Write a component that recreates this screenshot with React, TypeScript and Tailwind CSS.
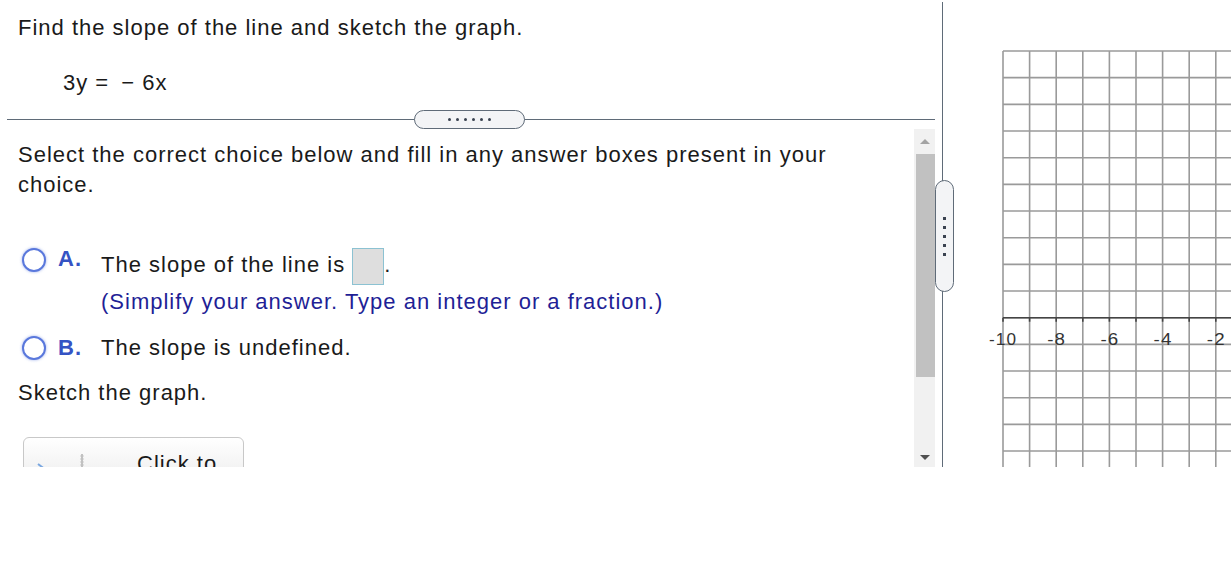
const font = { fontFamily: '"Liberation Sans", Arial, sans-serif' };

function Radio({ top }: { top: string }) {
  return (
    <span
      className={`block h-[24px] w-[24px] shrink-0 rounded-full border-[2px] border-[#5a78dc] bg-white shadow-[0_0_3px_rgba(90,120,220,0.6)] ${top}`}
    />
  );
}

function Graph() {
  const x0 = 60;
  const y0 = 51;
  const step = 26.6;
  const cols = Array.from({ length: 11 }, (_, i) => x0 + i * step);
  const rows = Array.from({ length: 17 }, (_, i) => y0 + i * 26.67);
  const axisY = y0 + 10 * 26.67;
  const labels = ["-10", "-8", "-6", "-4", "-2"];
  return (
    <svg width="288" height="467" className="block">
      {cols.map((x, i) => (
        <line key={"c" + i} x1={x} y1={y0} x2={x} y2={467} stroke="#9a9a9a" strokeWidth="1.6" />
      ))}
      {rows.map((y, i) => (
        <line key={"r" + i} x1={x0} y1={y} x2={288} y2={y} stroke="#9a9a9a" strokeWidth="1.6" />
      ))}
      <line x1={x0} y1={axisY} x2={288} y2={axisY} stroke="#444" strokeWidth="1.6" />
      {cols.map((x, i) => (
        <line key={"t" + i} x1={x} y1={axisY} x2={x} y2={axisY + 4} stroke="#444" strokeWidth="1.6" />
      ))}
      {labels.map((l, i) => (
        <text
          key={l}
          x={x0 + i * 2 * step - (l.length === 3 ? 14 : 9)}
          y={axisY + 27}
          textLength={l.length === 3 ? 28 : 19}
          lengthAdjust="spacingAndGlyphs"
          fontSize="16"
          fill="#333"
          fontFamily='"Liberation Sans", Arial, sans-serif'
        >
          {l}
        </text>
      ))}
    </svg>
  );
}

export default function App() {
  return (
    <div
      className="h-[562px] w-[1231px] bg-white text-[22px] leading-[30px] tracking-[1px] text-[#1a1a1a]"
      style={font}
    >
      <div className="flex h-[467px]">
        {/* left pane */}
        <div className="relative flex w-[942px] flex-col">
          <div className="h-[119px] pl-[18px] pt-[13px]">
            <p>Find the slope of the line and sketch the graph.</p>
            <p className="mt-[25px] pl-[45px]">
              3y =<span className="ml-[12px]">− 6x</span>
            </p>
          </div>

          <div className="relative mx-[7px] h-px bg-[#5f6b78]">
            <div className="absolute left-[407px] top-[-9px] flex h-[19px] w-[111px] items-center justify-center gap-[5px] rounded-full border border-[#5f6b78] bg-[#f3f4f6]">
              {[0, 1, 2, 3, 4, 5].map((i) => (
                <span key={i} className="h-[3px] w-[3px] rounded-full bg-[#3a4250]" />
              ))}
            </div>
          </div>

          <div className="flex min-h-0 flex-1">
            <div className="min-w-0 flex-1 overflow-hidden pl-[18px] pt-[20px]">
              <p className="w-[860px]">
                Select the correct choice below and fill in any answer boxes present in your choice.
              </p>

              <div className="mt-[46px] flex">
                <Radio top="mt-[2px] ml-[4px]" />
                <span className="ml-[12px] mt-[-2px] font-bold tracking-[1px] text-[#3553c4]">A.</span>
                <div className="ml-[19px]">
                  <p className="leading-[38px]">
                    The slope of the line is{" "}
                    <span className="inline-block h-[37px] w-[32px] border border-[#8cc2d2] bg-[#dedede] align-middle" />
                    .
                  </p>
                  <p className="mt-[2px] text-[#1f1f96]">
                    (Simplify your answer. Type an integer or a fraction.)
                  </p>
                </div>
              </div>

              <div className="mt-[16px] flex">
                <Radio top="mt-[3px] ml-[4px]" />
                <span className="ml-[12px] font-bold tracking-[1px] text-[#3553c4]">B.</span>
                <span className="ml-[19px]">The slope is undefined.</span>
              </div>

              <p className="mt-[15px]">Sketch the graph.</p>

              <div className="ml-[5px] mt-[29px] flex h-[50px] w-[221px] items-start rounded-[6px] border border-[#c8c8c8] bg-gradient-to-b from-white to-[#ececec]">
                <svg width="60" height="40" className="ml-[10px] mt-[10px]">
                  <line x1="4" y1="16" x2="20" y2="28" stroke="#7aa7e0" strokeWidth="2" />
                  <line x1="48" y1="6" x2="48" y2="40" stroke="#b0b0b0" strokeWidth="1.5" />
                  {[8, 11, 14, 17, 20, 23, 26, 29].map((y) => (
                    <line key={y} x1="46" y1={y} x2="50" y2={y} stroke="#c0c0c0" strokeWidth="0.8" />
                  ))}
                </svg>
                <span className="ml-[43px] mt-[11px]">Click to</span>
              </div>
            </div>

            {/* scrollbar */}
            <div className="mr-[7px] mt-[9px] flex w-[21px] flex-col bg-[#f1f1f1]">
              <div className="flex h-[25px] items-center justify-center">
                <span className="h-0 w-0 border-x-[5px] border-b-[5px] border-x-transparent border-b-[#a3a3a3]" />
              </div>
              <div className="ml-[2px] h-[223px] bg-[#c1c1c1]" />
              <div className="flex-1" />
              <div className="flex h-[20px] items-center justify-center">
                <span className="h-0 w-0 border-x-[5px] border-t-[5px] border-x-transparent border-t-[#505050]" />
              </div>
            </div>
          </div>
        </div>

        {/* divider */}
        <div className="relative mt-[2px] w-px bg-[#5f6b78]">
          <div className="absolute left-[-7px] top-[178px] flex h-[112px] w-[19px] flex-col items-center justify-center gap-[6px] rounded-full border border-[#5f6b78] bg-[#f3f4f6]">
            {[0, 1, 2, 3, 4].map((i) => (
              <span key={i} className="h-[3px] w-[3px] bg-[#3a4250]" />
            ))}
          </div>
        </div>

        {/* right pane */}
        <div className="w-[288px] overflow-hidden">
          <Graph />
        </div>
      </div>
    </div>
  );
}
